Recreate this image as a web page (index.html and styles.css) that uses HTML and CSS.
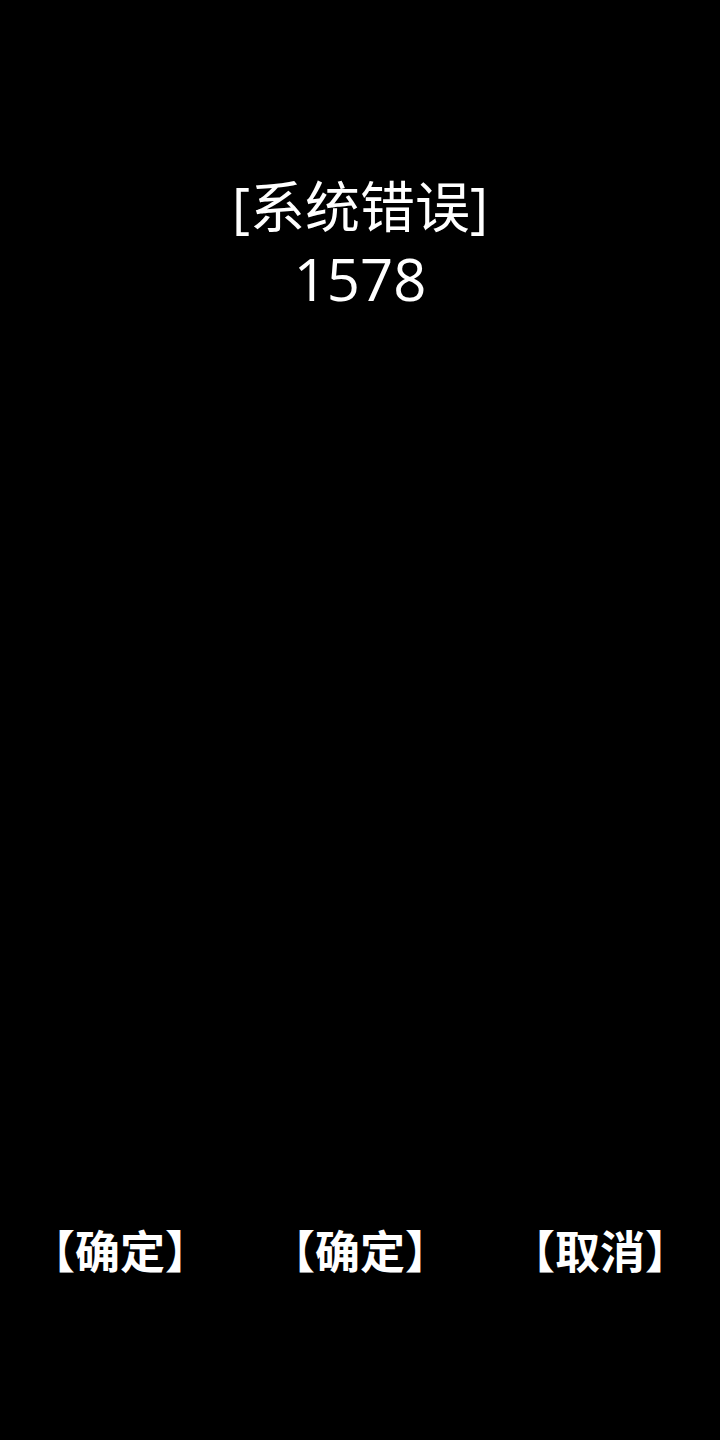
FILE: index.html
```html
<!DOCTYPE html>
<html lang="zh-CN">
<head>
<meta charset="utf-8">
<link rel="stylesheet" href="styles.css">
</head>
<body>
<main class="screen">
  <section class="message">
    <div class="title">[系统错误]</div>
    <div class="code">1578</div>
  </section>
  <nav class="actions">
    <div class="btn">【确定】</div>
    <div class="btn">【确定】</div>
    <div class="btn">【取消】</div>
  </nav>
</main>
</body>
</html>
```
FILE: styles.css
```css
html, body {
  margin: 0;
  padding: 0;
  background: #000;
}
.screen {
  width: 720px;
  height: 1440px;
  display: flex;
  flex-direction: column;
  color: #fff;
  font-family: "Open Sans", "Noto Sans CJK SC", sans-serif;
}
.message {
  padding-top: 166px;
  display: flex;
  flex-direction: column;
  align-items: center;
}
.title {
  font-size: 55px;
  line-height: 80px;
}
.code {
  font-size: 58px;
  line-height: 66px;
}
.actions {
  margin-top: auto;
  padding-bottom: 160px;
  display: grid;
  grid-template-columns: repeat(3, 1fr);
}
.btn {
  text-align: center;
  font-size: 45px;
  line-height: 56px;
  font-weight: 700;
}
```
